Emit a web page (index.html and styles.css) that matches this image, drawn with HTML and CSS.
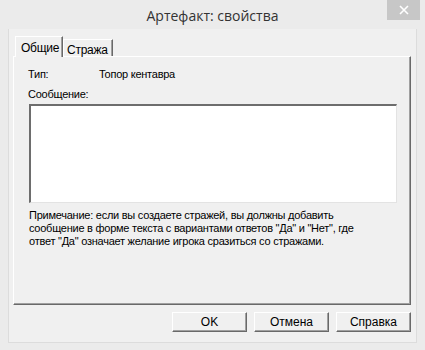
FILE: index.html
```html
<!DOCTYPE html>
<html lang="ru">
<head>
    <meta charset="UTF-8">
    <title>Артефакт: свойства</title>
    <link rel="stylesheet" href="styles.css">
</head>
<body>
    <div class="window">
        <div class="titlebar">
            <span class="title">Артефакт: свойства</span>
            <div class="close-btn">
                <svg width="10" height="10" viewBox="0 0 10 10">
                    <path d="M1 1 L9 9 M9 1 L1 9" stroke="#fff" stroke-width="1.6"/>
                </svg>
            </div>
        </div>

        <div class="client">
            <div class="tabs">
                <div class="tab active">Общие</div>
                <div class="tab">Стража</div>
            </div>

            <div class="panel">
                <div class="field-row">
                    <span class="field-label">Тип:</span>
                    <span class="field-value">Топор кентавра</span>
                </div>
                <div class="field-caption">Сообщение:</div>
                <div class="message-box"></div>
                <p class="note">Примечание: если вы создаете стражей, вы должны добавить<br>сообщение в форме текста с вариантами ответов "Да" и "Нет", где<br>ответ "Да" означает желание игрока сразиться со стражами.</p>
            </div>

            <div class="buttons">
                <button type="button" class="btn">OK</button>
                <button type="button" class="btn">Отмена</button>
                <button type="button" class="btn">Справка</button>
            </div>
        </div>
    </div>
</body>
</html>
```

FILE: styles.css
```css
body {
    margin: 0;
    padding: 0;
    background: #ebebeb;
    font-family: 'Liberation Sans', Arial, sans-serif;
}
.window {
    width: 425px;
    height: 350px;
    box-sizing: border-box;
    padding: 0 8px 7px 8px;
    background-color: #ebebeb;
    display: flex;
    flex-direction: column;
}
.titlebar {
    position: relative;
    height: 30px;
    margin: 0 -8px;
    display: flex;
    align-items: center;
    justify-content: center;
}
.title {
    font-family: 'Open Sans', sans-serif;
    font-size: 14px;
    color: #333;
    padding-top: 1px;
}
.close-btn {
    position: absolute;
    top: 0;
    right: 5px;
    width: 33px;
    height: 20px;
    background-color: #c7c7c7;
    display: flex;
    align-items: center;
    justify-content: center;
}
.client {
    flex: 1;
    background-color: #f0f0f0;
    border: 1px solid #dcdcdc;
    border-top: none;
    padding: 7px 5px 10px 4px;
    display: flex;
    flex-direction: column;
    font-size: 11px;
    letter-spacing: -0.25px;
    color: #000;
}
.tabs {
    display: flex;
    align-items: flex-end;
    height: 20px;
    padding-left: 2px;
    position: relative;
    z-index: 1;
}
.tab {
    height: 17px;
    box-sizing: border-box;
    padding: 3px 4px 0 3px;
    background-color: #f0f0f0;
    border-top: 1px solid #fff;
    border-left: 1px solid #fff;
    border-right: 1px solid #696969;
    box-shadow: inset -1px 0 0 #a0a0a0;
    font-size: 12px;
}
.tab.active {
    height: 21px;
    margin-bottom: -1px;
    width: 48px;
    padding: 4px 0 0 5px;
}
.panel {
    height: 249px;
    box-sizing: border-box;
    border-top: 1px solid #fff;
    border-left: 1px solid #fff;
    border-right: 1px solid #696969;
    border-bottom: 1px solid #696969;
    box-shadow: inset -1px -1px 0 #a0a0a0;
    padding: 10px 14px 0 14px;
}
.field-row {
    display: flex;
    height: 14px;
    align-items: center;
}
.field-label {
    width: 71px;
}
.field-caption {
    margin-top: 7px;
    height: 13px;
}
.message-box {
    margin: 3px 0 0 1px;
    width: 368px;
    height: 99px;
    box-sizing: border-box;
    background-color: #fff;
    border-top: 2px solid #6d6d6d;
    border-left: 2px solid #6d6d6d;
    border-right: 1px solid #e3e3e3;
    border-bottom: 1px solid #e3e3e3;
}
.note {
    margin: 6px 0 0 1px;
    line-height: 13px;
    white-space: nowrap;
}
.buttons {
    display: flex;
    justify-content: flex-end;
    gap: 7px;
    margin-top: 7px;
}
.btn {
    width: 75px;
    height: 20px;
    background-color: #f0f0f0;
    border-top: 1px solid #fff;
    border-left: 1px solid #fff;
    border-right: 1px solid #696969;
    border-bottom: 1px solid #696969;
    box-shadow: inset -1px -1px 0 #a0a0a0;
    font-family: 'Liberation Sans', Arial, sans-serif;
    font-size: 12px;
    color: #000;
    padding: 0;
}
```
